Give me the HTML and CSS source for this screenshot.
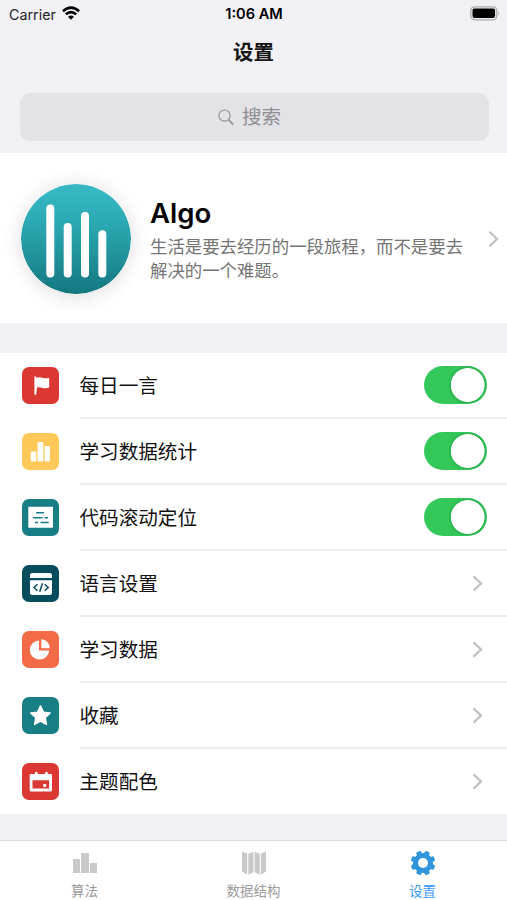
FILE: index.html
```html
<!DOCTYPE html>
<html lang="zh-CN">
<head>
<meta charset="utf-8">
<title>设置</title>
<link rel="stylesheet" href="styles.css">
</head>
<body>
<div class="screen">
  <header class="status">
    <div class="carrier"><span>Carrier</span>
      <svg width="18" height="14" viewBox="0 0 18 14"><g fill="none" stroke="#000" stroke-width="2.6"><path d="M.9 5.2Q9-2 17.1 5.2"/><path d="M3.8 8.3Q9 3.8 14.2 8.3"/></g><path d="M6 10.7Q9 8.3 12 10.7L9 13.8z"/></svg>
    </div>
    <div class="time">1:06 AM</div>
    <svg class="battery" width="31" height="15" viewBox="0 0 31 15"><rect x=".8" y=".8" width="26" height="13" rx="4" fill="#f1f0f5" stroke="#aaa9ad" stroke-width="1.3"/><rect x="2.5" y="2.6" width="22.6" height="9.5" rx="2"/><path d="M28.3 5q2 2.4 0 4.8z" fill="#aaa9ad"/></svg>
  </header>
  <h1 class="title">设置</h1>
  <div class="search">
    <svg width="16" height="17" viewBox="0 0 16 17" fill="none" stroke="#8e8e93"><circle cx="6.5" cy="6.6" r="5.6" stroke-width="1.2"/><path d="M10.6 10.8l4.6 4.7" stroke-width="1.7"/></svg>
    <span>搜索</span>
  </div>

  <section class="profile">
    <svg class="logo" width="110" height="110" viewBox="0 0 110 110"><defs><linearGradient id="teal" x2="0" y2="1"><stop stop-color="#38bac6"/><stop offset=".35" stop-color="#2ba9b3"/><stop offset="1" stop-color="#147780"/></linearGradient></defs><circle cx="55" cy="55" r="55" fill="url(#teal)"/><g fill="#fff"><rect x="25.3" y="20.6" width="8" height="73" rx="4"/><rect x="42.7" y="39" width="8" height="54.6" rx="4"/><rect x="60" y="28" width="8" height="65.6" rx="4"/><rect x="77.3" y="46.3" width="8" height="47.3" rx="4"/></g></svg>
    <div class="about">
      <h2>Algo</h2>
      <p>生活是要去经历的一段旅程，而不是要去<br>解决的一个难题。</p>
    </div>
    <svg class="chevron" width="11" height="18" viewBox="0 0 11 18"><path d="M1.5 1.7L9 9l-7.5 7.3"/></svg>
  </section>

  <ul class="list">
    <li class="row"><span class="icon red"><svg viewBox="0 0 37 37"><path d="M12.4 9.8q.9-.9 1.8 0v1.1q3-1.2 6.2-.1 2.9 1 6.8.2v9.6q-3.8 1.2-7 .1-2.8-1-5.2-.2l-.8 6.900q-.9.7-1.800 0z"/></svg></span><span class="label">每日一言</span><span class="switch"></span></li>
    <li class="row"><span class="icon yellow"><svg viewBox="0 0 37 37"><rect x="8.8" y="18.5" width="5.4" height="10" rx="1"/><rect x="15.500" y="9" width="5.800" height="19.500" rx="1"/><rect x="22.500" y="13" width="5.400" height="15.500" rx="1"/></svg></span><span class="label">学习数据统计</span><span class="switch"></span></li>
    <li class="row"><span class="icon teal"><svg viewBox="0 0 37 37"><path d="M6.300 7.800H31V28.800H6.300z"/><g fill="none" stroke="#187e86" stroke-width="1.600"><path d="M14 13.700h8M11 18.700h9.500M22.600 18.700H26M13 23.500h3.200M18.500 23.500h8.300"/></g></svg></span><span class="label">代码滚动定位</span><span class="switch"></span></li>
    <li class="row"><span class="icon navy"><svg viewBox="0 0 37 37"><path d="M8 13v-2.500Q8 8 10.500 8h17Q30 8 30 10.500V13zM8 15.200h22v12.300q0 2.500-2.500 2.500h-17Q8 30 8 27.500z"/><path d="M15.500 19.300L12 22.500l3.500 3.200M22.700 19.300l3.500 3.200-3.500 3.200M20.500 18.200l-2.800 8.600" fill="none" stroke="#074b5e" stroke-width="1.500"/></svg></span><span class="label">语言设置</span><svg class="chevron" width="11" height="18" viewBox="0 0 11 18"><path d="M1.500 1.700L9 9l-7.500 7.300"/></svg></li>
    <li class="row"><span class="icon orange"><svg viewBox="0 0 37 37"><path d="M17 9.500V19.500H27.200A9.700 9.500 0 1 1 17 9.500z"/><path d="M19.300 8.200q8 .8 8.500 9.100h-8.500z"/></svg></span><span class="label">学习数据</span><svg class="chevron" width="11" height="18" viewBox="0 0 11 18"><path d="M1.500 1.700L9 9l-7.500 7.300"/></svg></li>
    <li class="row"><span class="icon teal"><svg viewBox="0 0 37 37"><path d="M18.500 9l2.800 6.200 6.800.8-5 4.700 1.300 6.600-5.900-3.300-5.900 3.300 1.300-6.600-5-4.700 6.800-.8z" stroke="#fff" stroke-width="1.600" stroke-linejoin="round"/></svg></span><span class="label">收藏</span><svg class="chevron" width="11" height="18" viewBox="0 0 11 18"><path d="M1.500 1.700L9 9l-7.500 7.300"/></svg></li>
    <li class="row"><span class="icon red"><svg viewBox="0 0 37 37"><path fill-rule="evenodd" d="M9 11h4V9.300q1.300-1 2.600 0V11h7.500V9.300q1.300-1 2.600 0V11h3q1.300 0 1.300 1.300V27q0 1.500-1.500 1.500H9.200Q7.700 28.500 7.700 27V12.300Q7.700 11 9 11zM10.500 17.300v8.300h16.600v-8.300z"/><circle cx="22.700" cy="22.500" r="1.700"/></svg></span><span class="label">主题配色</span><svg class="chevron" width="11" height="18" viewBox="0 0 11 18"><path d="M1.500 1.700L9 9l-7.500 7.300"/></svg></li>
  </ul>

  <nav class="tabs">
    <div class="tab"><svg width="26" height="26" viewBox="0 0 26 26"><path d="M1 9h7v14H1zM9 3h8v20H9zM18 13h7v10h-7z"/></svg><span>算法</span></div>
    <div class="tab"><svg width="26" height="26" viewBox="0 0 26 26"><path d="M1 1.200l5.200 2.600V24.800L1 21.500zM7.300 3.800l5.200-2.100v20.600l-5.200 2.500zM13.600 1.700l5.200 2.100v21l-5.200-2.500zM19.900 3.800L25 1.200v20.300l-5.100 3.300z"/></svg><span>数据结构</span></div>
    <div class="tab active"><svg width="26" height="26" viewBox="-13 -13 26 26"><circle r="7.500" fill="none" stroke="#3095db" stroke-width="5"/><g fill="#3095db" transform="rotate(22.500)"><rect x="-2.600" y="-12.300" width="5.200" height="24.600" rx="1.500"/><rect x="-2.600" y="-12.300" width="5.200" height="24.600" rx="1.500" transform="rotate(45)"/><rect x="-2.600" y="-12.300" width="5.200" height="24.600" rx="1.500" transform="rotate(90)"/><rect x="-2.600" y="-12.300" width="5.200" height="24.600" rx="1.500" transform="rotate(135)"/></g><circle r="5" fill="#fff"/></svg><span>设置</span></div>
  </nav>
</div>
</body>
</html>
```
FILE: styles.css
```css
* { box-sizing: border-box; }
body { margin: 0; font-family: Inter, "Noto Sans CJK SC", sans-serif; }
svg { display: block; flex: none; }
.screen { display: flex; flex-direction: column; width: 507px; height: 900px; background: #f1f0f5; overflow: hidden; }
.status { display: grid; grid-template-columns: 1fr auto 1fr; align-items: center; height: 28px; padding: 0 6px 0 9px; font-size: 14.3px; }
.carrier { display: flex; align-items: center; gap: 6px; color: #252527; }
.carrier svg { margin-top: -3px; }
.time { font-weight: 600; font-size: 14.6px; margin: -1px 2px 0 0; }
.battery { justify-self: end; margin-top: -2px; }
.title { margin: 0; height: 65px; line-height: 50px; text-align: center; font-size: 20.5px; font-weight: 600; color: #151515; }
.search { display: flex; align-items: center; justify-content: center; gap: 8px; height: 48px; margin: 0 18.5px 0 19.5px; border-radius: 10px; background: #e3e2e7; color: #8e8e93; font-size: 19.5px; line-height: 28px; padding-right: 9px; }
.profile { display: flex; align-items: center; height: 170px; margin-top: 12px; padding: 1px 8px 0 20.5px; background: #fff; }
.logo { border-radius: 50%; box-shadow: 0 2px 20px rgba(0, 0, 0, .14); }
.about { flex: 1; margin: 2px 0 0 19.5px; }
.about h2 { margin: 0; font-size: 27.5px; line-height: 34px; font-weight: 600; letter-spacing: 0; }
.about p { margin: 5px 0 0; font-size: 17.4px; line-height: 24px; color: #747474; white-space: nowrap; }
.chevron { fill: none; stroke: #c0c0c2; stroke-width: 2.3; }
.list { margin: 30px 0 0; padding: 0; list-style: none; background: #fff; }
.row { display: flex; height: 66px; padding-left: 21.5px; }
.row:last-child { height: 65px; }
.icon { width: 37px; height: 37px; margin: 14.4px 21px 0 0; border-radius: 7px; flex: none; overflow: hidden; }
.icon svg { width: 37px; height: 37px; fill: #fff; }
.red { background: #db3833; }
.yellow { background: #ffc959; }
.teal { background: #187e86; }
.navy { background: #074b5e; }
.orange { background: #f36a47; }
.label { flex: 1; border-bottom: 2px solid #ededef; line-height: 66px; font-size: 19.6px; color: #111; }
.row:last-child .label { border: 0; }
.row > .chevron { box-sizing: content-box; padding: 23.5px 24px 22.5px 0; border-bottom: 2px solid #ededef; }
.row:last-child > .chevron { border: 0; }
.switch { display: flex; justify-content: flex-end; align-items: flex-start; width: 83px; padding-top: 13px; padding-right: 20.5px; border-bottom: 2px solid #ededef; }
.switch::before { content: ""; width: 62.5px; height: 38px; border-radius: 19px; background: radial-gradient(circle at 43.7px 19px, #fff 16.5px, #2db451 17.2px, #34c759 20px); }
.tabs { display: grid; grid-template-columns: repeat(3, 1fr); height: 60px; margin-top: auto; border-top: 1px solid #dcdce0; background: #fff; }
.tab { display: flex; flex-direction: column; align-items: center; padding-top: 9px; color: #9b9b9b; fill: #c9c9c9; font-size: 13.5px; line-height: 18px; }
.tab span { margin-top: 6px; }
.active { color: #3b99fc; }
```
